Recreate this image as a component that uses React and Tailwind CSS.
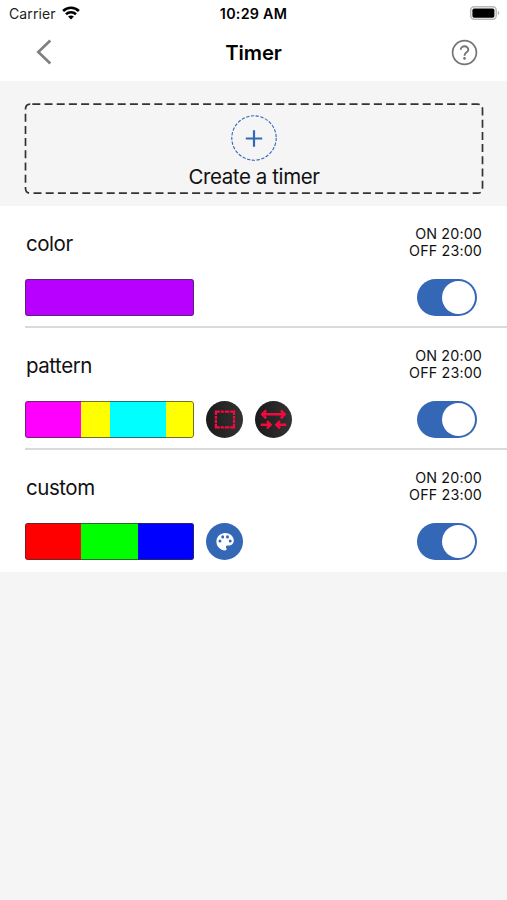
const timers = [
  {
    name: "color",
    on: "20:00",
    off: "23:00",
    colors: [{ fill: "#b700ff", size: 6 }],
    badges: [],
  },
  {
    name: "pattern",
    on: "20:00",
    off: "23:00",
    colors: [
      { fill: "#ff00ff", size: 2 },
      { fill: "#ffff00", size: 1 },
      { fill: "#00ffff", size: 2 },
      { fill: "#ffff00", size: 1 },
    ],
    badges: ["frame", "arrows"],
  },
  {
    name: "custom",
    on: "20:00",
    off: "23:00",
    colors: [
      { fill: "#ff0000", size: 2 },
      { fill: "#00ff00", size: 2 },
      { fill: "#0000ff", size: 2 },
    ],
    badges: ["palette"],
  },
];

const WifiIcon = () => (
  <svg className="w-[18px] h-[14px] -mt-px" viewBox="0 0 18 14" fill="none" stroke="#000" strokeWidth="2.6">
    <path d="M1.1 5C5.5 .7 12.5 .7 16.9 5" />
    <path d="M4 8.3C6.8 5.6 11.2 5.6 14 8.3" />
    <path d="M9 13.4L6.1 10.5C7.7 9 10.3 9 11.9 10.5Z" fill="#000" stroke="none" />
  </svg>
);

const BatteryIcon = () => (
  <svg className="w-[31px] h-[14px] -mt-px" viewBox="0 0 31 14">
    <rect x="1.7" y=".8" width="25.500" height="12.4" rx="3.4" fill="#fff" stroke="#b8b8b8" strokeWidth="1.5" />
    <rect x="3.400" y="2.5" width="22" height="9.200" rx="1.800" fill="#000" />
    <path d="M28.800 4.900C30.800 5.600 30.800 8.400 28.800 9.100Z" fill="#b5b5b5" />
  </svg>
);

const Badge = ({ type }) => {
  if (type === "palette") {
    return (
      <div className="size-[37px] rounded-full bg-[#3567b7] flex items-center justify-center">
        <svg className="w-[22px] h-[23px]" viewBox="0 0 24 24" fill="#fff" preserveAspectRatio="none">
          <path d="M12 3c4.97 0 9.6 3.2 9.6 8 0 3-2.3 5.2-5.2 5.2h-1.9c-.9 0-1.5.7-1.5 1.5 0 .4.2.8.4 1.1.3.3.4.6.4 1 0 .9-.7 1.5-1.6 1.5C7 21.300 2.600 17 2.600 12S7 3 12 3zM6.500 13a1.600 1.600 0 1 0 0-3.200 1.600 1.600 0 0 0 0 3.200zm3-4.200a1.600 1.600 0 1 0 0-3.200 1.600 1.600 0 0 0 0 3.200zm5.200 0a1.600 1.600 0 1 0 0-3.200 1.600 1.600 0 0 0 0 3.200zm3 4.200a1.600 1.600 0 1 0 0-3.200 1.600 1.600 0 0 0 0 3.200z" />
        </svg>
      </div>
    );
  }

  return (
    <div className="size-[37px] rounded-full bg-linear-to-r from-[#1b1b1b] to-[#333333]">
      <svg className="size-[37px]" viewBox="0 0 37 37" fill="none" stroke="#f5093f" strokeWidth="2.200">
        {type === "frame" ? (
          <g>
            <path d="M9.900 14V10.600H13.800M24.200 10.600H28V14M28 23V26.400H24.200M13.800 26.400H9.900V23" />
            <path d="M14.700 10.600H17.800M18.700 10.600H23.400M14.700 26.400H17.800M18.700 26.400H23.400M9.900 14.900V17.700M9.900 18.500V22.200M28 14.900V17.700M28 18.500V22.200" />
          </g>
        ) : (
          <g strokeWidth="2.400">
            <path d="M7.500 13.300H29.500M11.200 9.300L7.200 13.300L11.200 17.300M25.800 9.300L29.800 13.300L25.800 17.300" />
            <path d="M5.700 23.700H15M12 20L15.700 23.700L12 27.400M31.200 23.700H22M25 20L21.300 23.700L25 27.400" />
            <path d="M9.500 11.500V15.100L7.500 13.300ZM27.500 11.500V15.100L29.500 13.300Z" fill="#f5093f" strokeWidth="1" />
            <path d="M13 22.200V25.200L15 23.700ZM24 22.200V25.200L22 23.700Z" fill="#f5093f" strokeWidth="1" />
          </g>
        )}
      </svg>
    </div>
  );
};

const Toggle = () => (
  <button className="w-[60px] h-[37px] mt-px rounded-full bg-[#3567b7] flex items-center justify-end pr-[2px]">
    <span className="size-[33px] rounded-full bg-white" />
  </button>
);

const TimerRow = ({ timer, last }) => (
  <div className="h-[122px] pl-[25px]">
    <div className={last ? "h-full" : "h-full border-b-2 border-[#dadada]"}>
      <div className="h-[72px] pl-px pr-[25px] pt-[19px] flex justify-between">
        <h2 className="text-[20.5px] leading-[37px] tracking-[-0.45px]">{timer.name}</h2>
        <div className="text-right text-[14.3px] leading-[17px] tracking-[0.15px]">
          <p>ON {timer.on}</p>
          <p>OFF {timer.off}</p>
        </div>
      </div>
      <div className="h-[38px] pr-[30px] flex items-center justify-between">
        <div className="flex items-center gap-3">
          <div className="relative w-[169px] h-[37px] rounded-[3px] overflow-hidden flex">
            {timer.colors.map((color, index) => (
              <div key={index} style={{ flexGrow: color.size, backgroundColor: color.fill }} />
            ))}
            <div className="absolute inset-0 rounded-[3px] border border-[#333333]/70" />
          </div>
          {timer.badges.map((type) => (
            <Badge key={type} type={type} />
          ))}
        </div>
        <Toggle />
      </div>
    </div>
  </div>
);

const App = () => {
  return (
    <div className="w-[507px] h-[900px] bg-[#f5f5f5] text-[#111111] font-['Inter','Liberation_Sans',sans-serif]">
      {/* Status bar + header */}
      <div className="h-[81px] bg-white text-black">
        <div className="h-[27px] px-[7px] grid grid-cols-3 items-center">
          <div className="pl-[2px] flex items-center gap-[6px]">
            <span className="text-[14px] tracking-[0.1px] text-[#222222]">Carrier</span>
            <WifiIcon />
          </div>
          <span className="text-center text-[14.3px] tracking-[0.25px] font-semibold">10:29 AM</span>
          <div className="flex justify-end">
            <BatteryIcon />
          </div>
        </div>
        <div className="h-[50px] px-[29px] grid grid-cols-3 items-center">
          <svg className="w-[16px] h-[26px] ml-[7px]" viewBox="0 0 16 26" fill="none" stroke="#808080" strokeWidth="2.700">
            <path d="M14.300 1.500L2.300 13L14.300 24.500" />
          </svg>
          <h1 className="pt-[2px] text-center text-[20.3px] tracking-[-0.1px] font-semibold">Timer</h1>
          <svg className="w-[27px] h-[27px] justify-self-end" viewBox="0 0 27 27" fill="none" stroke="#747474">
            <circle cx="13.500" cy="13.500" r="11.900" strokeWidth="1.700" />
            <path d="M9.700 10.800C9.700 6 17.400 6.200 17.300 10.700C17.300 13.500 13.500 13.200 13.500 16.700" strokeWidth="1.900" />
            <circle cx="13.500" cy="19.400" r="1.300" fill="#747474" stroke="none" />
          </svg>
        </div>
      </div>

      {/* Create a timer */}
      <div className="h-[125px] pl-[24px] pr-[23px] pt-[22px]">
        <button className="relative w-full h-[92px] pt-[12px] flex flex-col items-center">
          <svg className="absolute inset-0 w-full h-full" viewBox="0 0 460 92" fill="none" stroke="#333333" strokeWidth="1.700">
            <path
              d="M8.300 1.200H453.500Q458.500 1.200 458.500 6.200V85.200Q458.500 90.200 453.500 90.200H6.500Q1.500 90.200 1.500 85.200V6.200Q1.500 1.200 6.500 1.200H8.300"
              strokeDasharray="8 4.200"
            />
          </svg>
          <svg className="w-[46px] h-[46px]" viewBox="0 0 46 46" fill="none" stroke="#3567b7">
            <circle cx="23" cy="23" r="22.200" strokeWidth="1.100" strokeDasharray="3.300 1.500" />
            <path d="M23 15.300V31.700M14.800 23.500H31.200" strokeWidth="2.200" />
          </svg>
          <span className="text-[20.5px] leading-[31px] tracking-[-0.4px]">Create a timer</span>
        </button>
      </div>

      {/* Timer list */}
      <div className="bg-white">
        {timers.map((timer, index) => (
          <TimerRow key={timer.name} timer={timer} last={index === timers.length - 1} />
        ))}
      </div>
    </div>
  );
};

export default App;
